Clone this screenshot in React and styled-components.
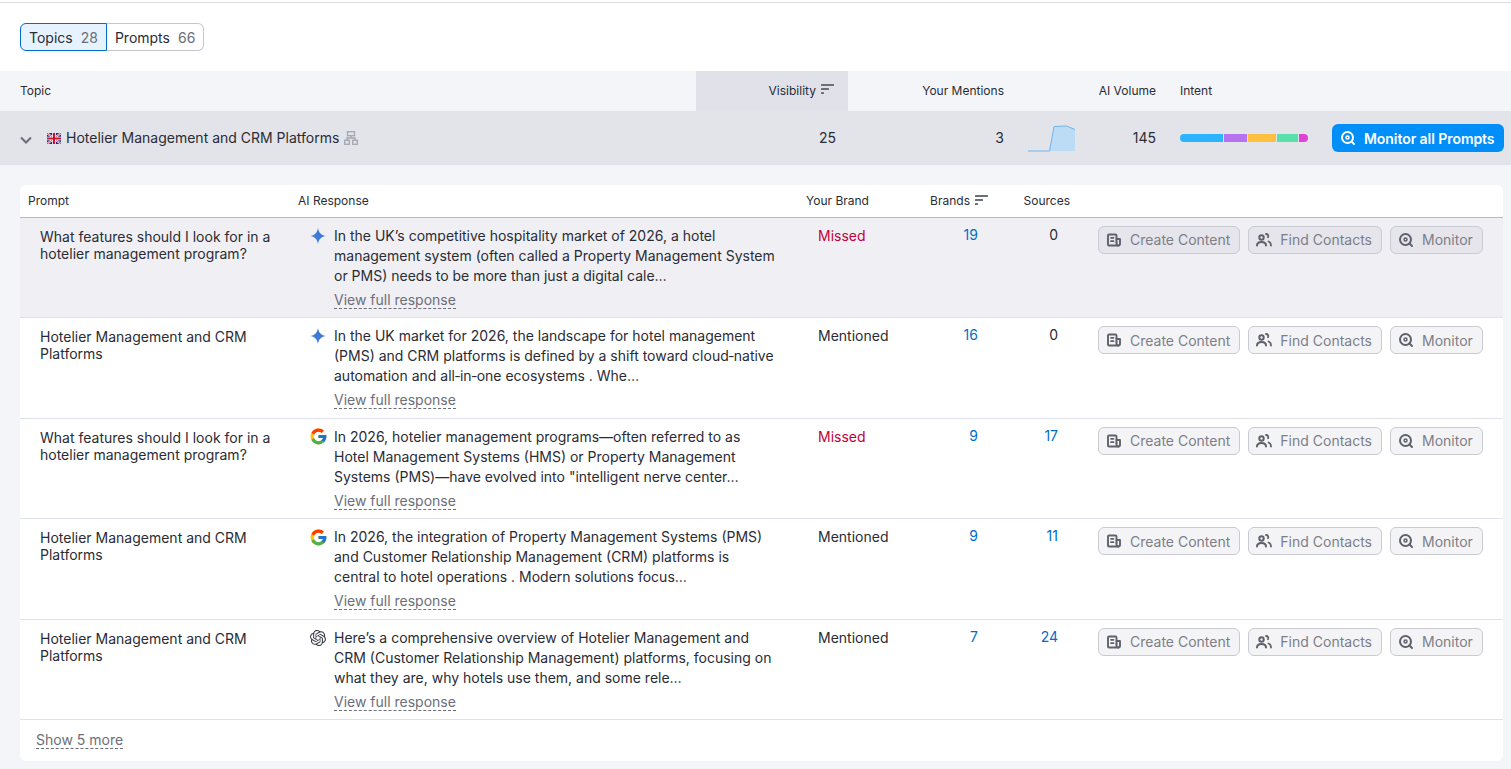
import styled, { createGlobalStyle } from 'styled-components'
import { FcGoogle } from 'react-icons/fc'
import { SiOpenai } from 'react-icons/si'

const rows = [
	{
		prompt: 'What features should I look for in a hotelier management program?',
		engine: 'gemini',
		text: 'In the UK’s competitive hospitality market of 2026, a hotel management system (often called a Property Management System or PMS) needs to be more than just a digital cale…',
		brand: 'Missed',
		brands: 19,
		sources: 0,
		active: true,
	},
	{
		prompt: 'Hotelier Management and CRM Platforms',
		engine: 'gemini',
		text: 'In the UK market for 2026, the landscape for hotel management (PMS) and CRM platforms is defined by a shift toward cloud\u2010native automation and all\u2010in\u2010one ecosystems . Whe…',
		brand: 'Mentioned',
		brands: 16,
		sources: 0,
	},
	{
		prompt: 'What features should I look for in a hotelier management program?',
		engine: 'google',
		text: 'In 2026, hotelier management programs—often referred to as Hotel Management Systems (HMS) or Property Management Systems (PMS)—have evolved into "intelligent nerve center…',
		brand: 'Missed',
		brands: 9,
		sources: 17,
	},
	{
		prompt: 'Hotelier Management and CRM Platforms',
		engine: 'google',
		text: 'In 2026, the integration of Property Management Systems (PMS) and Customer Relationship Management (CRM) platforms is central to hotel operations . Modern solutions focus…',
		brand: 'Mentioned',
		brands: 9,
		sources: 11,
	},
	{
		prompt: 'Hotelier Management and CRM Platforms',
		engine: 'openai',
		text: 'Here’s a comprehensive overview of Hotelier Management and CRM (Customer Relationship Management) platforms, focusing on what they are, why hotels use them, and some rele…',
		brand: 'Mentioned',
		brands: 7,
		sources: 24,
	},
]

const intentParts = [
	{ color: '#2bb3ff', width: 43 },
	{ color: '#b772f0', width: 23 },
	{ color: '#ffbf3f', width: 28 },
	{ color: '#59dfa9', width: 21 },
	{ color: '#e044d6', width: 9 },
]

const SortIcon = () => (
	<svg width="13" height="10" viewBox="0 0 13 10" fill="#6c6e79">
		<rect x="0" y="0" width="13" height="2" rx="0.5" />
		<rect x="0" y="4" width="8" height="2" rx="0.5" />
		<rect x="0" y="8" width="3" height="2" rx="0.5" />
	</svg>
)

const MonitorIcon = () => (
	<svg width="16" height="16" viewBox="0 0 16 16" fill="none" stroke="currentColor" strokeWidth="2" strokeLinecap="round">
		<circle cx="7.500" cy="7.500" r="5.500" />
		<path d="M11.500 11.500 14 14" />
		<circle cx="7.500" cy="7.500" r="1.500" strokeWidth="1.500" />
	</svg>
)

const ContentIcon = () => (
	<svg width="16" height="16" viewBox="0 0 16 16" fill="none" stroke="currentColor" strokeWidth="1.900" strokeLinecap="round" strokeLinejoin="round">
		<path d="M10.500 10V3.500a1 1 0 0 0-1-1H3a1 1 0 0 0-1 1v9a1 1 0 0 0 1 1h9.500" />
		<path d="M10.500 7H14v5a1.500 1.500 0 0 1-1.500 1.500A2 2 0 0 1 10.500 11.500V10" />
		<path d="M5 5.800H7.500M5 9.200H7.500" strokeWidth="1.700" />
	</svg>
)

const ContactsIcon = () => (
	<svg width="16" height="16" viewBox="0 0 16 16" fill="none" stroke="currentColor" strokeWidth="2" strokeLinecap="round">
		<circle cx="5.500" cy="5.500" r="2.200" />
		<path d="M1 13.500c0-2.400 2-3.500 4.500-3.500S10 11.100 10 13.500" />
		<path d="M10 2a2.200 2.200 0 0 1 2 3.300" strokeWidth="1.800" />
		<path d="M12.500 9.500c1.500.5 2.500 2 2.500 4" strokeWidth="1.800" />
	</svg>
)

const HierarchyIcon = () => (
	<svg width="14" height="14" viewBox="0 0 14 14" fill="none" stroke="#a4a6b0" strokeWidth="1.300">
		<rect x="3.500" y="0.700" width="7" height="4" />
		<rect x="0.700" y="9.300" width="4.600" height="4" />
		<rect x="8.700" y="9.300" width="4.600" height="4" />
		<path d="M7 4.700V7M3 9.300V7h8v2.300" />
	</svg>
)

const FlagUK = () => (
	<svg width="14" height="11" viewBox="0 0 14 11">
		<rect width="14" height="11" fill="#1f2f7a" />
		<path d="M0 0 14 11M14 0 0 11" stroke="#fff" strokeWidth="2" />
		<path d="M0 0 14 11M14 0 0 11" stroke="#c8102e" strokeWidth="0.800" />
		<path d="M7 0V11M0 5.500H14" stroke="#fff" strokeWidth="3.600" />
		<path d="M7 0V11M0 5.500H14" stroke="#c8102e" strokeWidth="2" />
	</svg>
)

const GeminiIcon = () => (
	<svg width="16" height="16" viewBox="0 0 16 16">
		<defs>
			<linearGradient id="gemini" x1="0" y1="1" x2="1" y2="0">
				<stop offset="0" stopColor="#4285e8" />
				<stop offset="1" stopColor="#3a6fc8" />
			</linearGradient>
		</defs>
		<path d="M8 0C8.500 4.500 11.500 7.500 16 8 11.500 8.500 8.500 11.500 8 16 7.500 11.500 4.500 8.500 0 8 4.500 7.500 7.500 4.500 8 0Z" fill="url(#gemini)" />
	</svg>
)

const Sparkline = () => (
	<svg width="48" height="27" viewBox="0 0 48 27">
		<path d="M21.500 26 26 1.500 38.500 1 47 4.500V26Z" fill="#bcdcf5" />
		<path d="M0 26H21.500L26 1.500 38.500 1 47 4.500" fill="none" stroke="#6db6ee" strokeWidth="1" />
	</svg>
)

const EngineIcon = ({ engine }) => {
	if (engine === 'google') return <FcGoogle size={19} />
	if (engine === 'openai') return <SiOpenai size={16} color="#3a3c45" />
	return <GeminiIcon />
}

const App = () => {
	return (
		<Page>
			<GlobalStyle />
			<TopLine />
			<Tabs>
				<Tab $active>Topics <Count>28</Count></Tab>
				<Tab $last>Prompts <Count>66</Count></Tab>
			</Tabs>

			<TopicHead>
				<HeadCell>Topic</HeadCell>
				<HeadCell $right $sorted>Visibility <SortIcon /></HeadCell>
				<HeadCell $right>Your Mentions</HeadCell>
				<HeadCell $right>AI Volume</HeadCell>
				<HeadCell>Intent</HeadCell>
			</TopicHead>

			<TopicRow>
				<TopicName>
					<Chevron width="12" height="8" viewBox="0 0 12 8" fill="none" stroke="#6c6e79" strokeWidth="2">
						<path d="M1 1.500 6 6.500 11 1.500" />
					</Chevron>
					<FlagUK />
					<TopicLabel>Hotelier Management and CRM Platforms</TopicLabel>
					<HierarchyIcon />
				</TopicName>
				<TopicValue $pad={12}>25</TopicValue>
				<TopicValue>3</TopicValue>
				<VolumeCell>
					<Sparkline />
					<TopicLabel>145</TopicLabel>
				</VolumeCell>
				<IntentBar>
					{intentParts.map(part => (
						<IntentPart key={part.color} $color={part.color} style={{ width: part.width }} />
					))}
				</IntentBar>
				<MonitorAll><MonitorIcon />Monitor all Prompts</MonitorAll>
			</TopicRow>

			<Panel>
				<Card>
					<CardHead>
						<CardHeadCell>Prompt</CardHeadCell>
						<CardHeadCell>AI Response</CardHeadCell>
						<CardHeadCell>Your Brand</CardHeadCell>
						<CardHeadCell $right $pad={10}>Brands <SortIcon /></CardHeadCell>
						<CardHeadCell $right>Sources</CardHeadCell>
					</CardHead>

					{rows.map((row, idx) => (
						<Row key={idx} $active={row.active}>
							<PromptCell>{row.prompt}</PromptCell>
							<ResponseCell>
								<EngineSlot><EngineIcon engine={row.engine} /></EngineSlot>
								<div>
									<ResponseText>{row.text}</ResponseText>
									<DashedLink>View full response</DashedLink>
								</div>
							</ResponseCell>
							<BrandCell $missed={row.brand === 'Missed'}>{row.brand}</BrandCell>
							<CountCell $link>{row.brands}</CountCell>
							<CountCell $link={row.sources > 0}>{row.sources}</CountCell>
							<Actions>
								<ActionButton><ContentIcon />Create Content</ActionButton>
								<ActionButton><ContactsIcon />Find Contacts</ActionButton>
								<ActionButton><MonitorIcon />Monitor</ActionButton>
							</Actions>
						</Row>
					))}

					<CardFooter>
						<DashedLink>Show 5 more</DashedLink>
					</CardFooter>
				</Card>
			</Panel>
		</Page>
	)
}

const GlobalStyle = createGlobalStyle`
	html, body {
		margin: 0;
		background: #fff;
		font-family: Inter, 'Liberation Sans', sans-serif;
		color: #2a2c35;
	}

	* {
		box-sizing: border-box;
	}
`

const Page = styled.div`
	width: 1511px;
	height: 769px;
	overflow: hidden;
	background: #f4f5f9;
`

const TopLine = styled.div`
	height: 3px;
	background: #fff;
	border-bottom: 1px solid #dfe0e6;
`

const Tabs = styled.div`
	display: flex;
	height: 68px;
	padding: 20px 20px 0;
	background: #fff;
`

const Tab = styled.div`
	display: flex;
	align-items: center;
	gap: 8px;
	height: 28px;
	padding: 0 8px;
	font-size: 14px;
	border: 1px solid ${props => props.$active ? '#006dca' : '#c4c7cf'};
	border-left-width: ${props => props.$last ? 0 : '1px'};
	border-radius: ${props => props.$active ? '6px 0 0 6px' : '0 6px 6px 0'};
	background: ${props => props.$active ? '#e6f3fe' : '#fff'};
`

const Count = styled.span`
	color: #6c6e79;
`

const TopicHead = styled.div`
	display: grid;
	grid-template-columns: 696px 152px 156px 152px 1fr;
	height: 40px;
	background: #f4f5f9;
`

const HeadCell = styled.div`
	display: flex;
	align-items: center;
	justify-content: ${props => props.$right ? 'flex-end' : 'flex-start'};
	gap: 5px;
	font-size: 12px;
	padding-bottom: 2px;
	padding-right: ${props => props.$sorted ? '14px' : 0};
	background: ${props => props.$sorted ? '#e0e1e9' : 'transparent'};

	&:first-child {
		padding-left: 20px;
	}

	&:last-child {
		padding-left: 24px;
	}

	svg {
		margin-top: -2px;
	}
`

const TopicRow = styled.div`
	display: grid;
	grid-template-columns: 696px 152px 156px 152px 176px 1fr;
	align-items: center;
	height: 54px;
	background: #e3e4ea;
	font-size: 14px;
`

const TopicName = styled.div`
	display: flex;
	align-items: center;
	padding-left: 20px;

	svg:nth-of-type(2) {
		margin: 0 5px 0 15px;
	}

	svg:last-child {
		margin-left: 5px;
	}
`

const TopicLabel = styled.span`
	padding-bottom: 2px;
`

const Chevron = styled.svg`
	margin-top: 3px;
`

const TopicValue = styled.div`
	text-align: right;
	padding-bottom: 2px;
	padding-right: ${props => props.$pad || 0}px;
`

const VolumeCell = styled.div`
	display: flex;
	align-items: center;
	justify-content: space-between;
	padding-left: 24px;
`

const IntentBar = styled.div`
	display: flex;
	gap: 1px;
	width: 128px;
	height: 8px;
	margin-left: 24px;
	border-radius: 4px;
	overflow: hidden;
`

const IntentPart = styled.div`
	background: ${props => props.$color};
`

const MonitorAll = styled.button`
	display: flex;
	align-items: center;
	gap: 8px;
	width: 172px;
	height: 28px;
	padding: 0 8px;
	border: none;
	border-radius: 6px;
	background: #008ff8;
	color: #fff;
	font-family: inherit;
	font-size: 14px;
	font-weight: 600;
	letter-spacing: -0.06px;
	white-space: nowrap;
`

const Panel = styled.div`
	padding: 20px 8px 8px 20px;
`

const Card = styled.div`
	background: #fff;
	border-radius: 6px;
	overflow: hidden;
`

const columns = '270px 508px 108px 92px 80px 1fr'

const CardHead = styled.div`
	display: grid;
	grid-template-columns: ${columns};
	height: 32.5px;
	border-bottom: 1px solid #b8bac3;
`

const CardHeadCell = styled.div`
	display: flex;
	align-items: center;
	justify-content: ${props => props.$right ? 'flex-end' : 'flex-start'};
	gap: 5px;
	padding: 0 ${props => props.$pad || 8}px 0 8px;
	font-size: 12px;

	svg {
		margin-top: -2px;
	}
`

const Row = styled.div`
	display: grid;
	grid-template-columns: ${columns};
	height: 100.5px;
	font-size: 14px;
	border-bottom: 1px solid #e0e1e9;
	background: ${props => props.$active ? '#f0f0f4' : '#fff'};
`

const PromptCell = styled.div`
	padding: 10px 12px 0 20px;
	line-height: 17px;
`

const ResponseCell = styled.div`
	display: flex;
	gap: 8px;
	padding: 8px 20px 0;
`

const EngineSlot = styled.div`
	flex: none;
	width: 16px;
	height: 20px;
	display: flex;
	align-items: center;
	justify-content: center;

	svg {
		flex: none;
	}
`

const ResponseText = styled.div`
	line-height: 20px;
	margin-bottom: 5px;
`

const DashedLink = styled.span`
	color: #6c6e79;
	font-size: 14px;
	line-height: 17px;
	border-bottom: 1px dashed #6c6e79;
	display: inline-block;
`

const BrandCell = styled.div`
	padding: 9px 20px 0;
	line-height: 17px;
	color: ${props => props.$missed ? '#c4003b' : 'inherit'};
`

const CountCell = styled.div`
	padding: 8px 20px 0 0;
	line-height: 17px;
	text-align: right;
	color: ${props => props.$link ? '#006dca' : 'inherit'};
`

const Actions = styled.div`
	display: flex;
	gap: 8px;
	padding: 8px 0 0 20px;
`

const ActionButton = styled.div`
	display: flex;
	align-items: center;
	gap: 8px;
	height: 28px;
	padding: 0 9px 0 7px;
	font-size: 14px;
	color: #7c7e89;
	background: rgba(40, 44, 70, 0.05);
	border: 1px solid #c9cad2;
	border-radius: 6px;
	white-space: nowrap;

	svg {
		color: #5f616b;
		flex: none;
	}
`

const CardFooter = styled.div`
	padding: 9px 16px 0;
	height: 41px;
`

export default App
